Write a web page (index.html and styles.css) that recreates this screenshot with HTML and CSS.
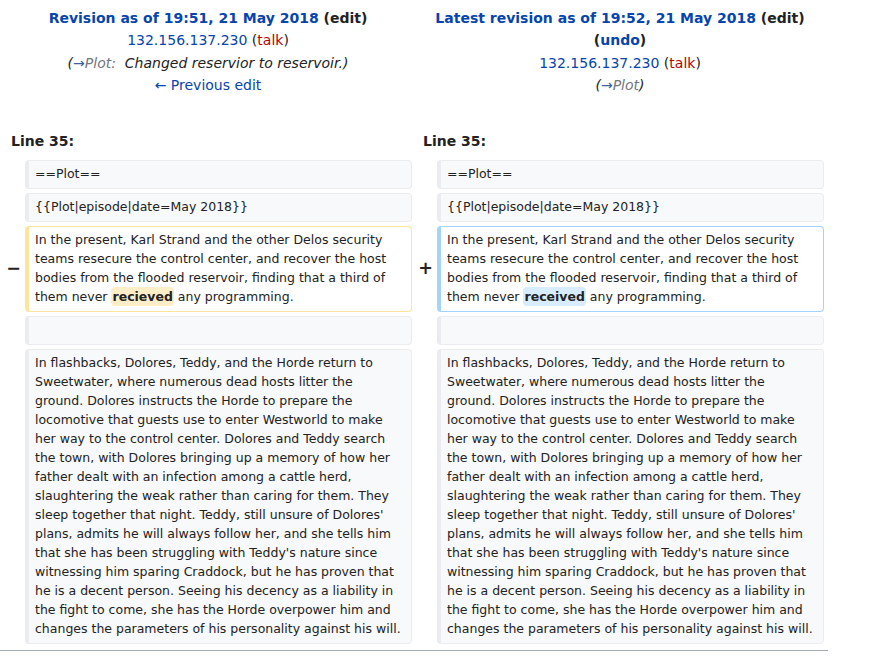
FILE: index.html
```html
<!DOCTYPE html>
<html lang="en">
<head>
<meta charset="utf-8">
<title>Difference between revisions</title>
<link rel="stylesheet" href="styles.css">
</head>
<body>
<div class="diff">
  <div class="diff-title">
    <div class="title-main"><a class="link" href="#">Revision as of 19:51, 21 May 2018</a> <span class="dark">(edit)</span></div>
    <div><a class="link" href="#">132.156.137.230</a> (<a class="new" href="#">talk</a>)</div>
    <div class="comment">(<a class="link arrow" href="#">→</a><span class="autocomment">Plot:</span>&nbsp; Changed reservior to reservoir.)</div>
    <div><a class="link" href="#">← Previous edit</a></div>
  </div>
  <div class="diff-title">
    <div class="title-main"><a class="link" href="#">Latest revision as of 19:52, 21 May 2018</a> <span class="dark">(edit)</span> (<a class="link" href="#">undo</a>)</div>
    <div><a class="link" href="#">132.156.137.230</a> (<a class="new" href="#">talk</a>)</div>
    <div class="comment">(<a class="link arrow" href="#">→</a><span class="autocomment">Plot</span>)</div>
  </div>

  <div class="diff-lineno">Line 35:</div>
  <div class="diff-lineno">Line 35:</div>

  <div class="diff-marker"></div>
  <div class="diff-line diff-context">==Plot==</div>
  <div class="diff-marker"></div>
  <div class="diff-line diff-context">==Plot==</div>

  <div class="diff-marker"></div>
  <div class="diff-line diff-context">{{Plot|episode|date=May 2018}}</div>
  <div class="diff-marker"></div>
  <div class="diff-line diff-context">{{Plot|episode|date=May 2018}}</div>

  <div class="diff-marker">−</div>
  <div class="diff-line diff-deletedline">In the present, Karl Strand and the other Delos security teams resecure the control center, and recover the host bodies from the flooded reservoir, finding that a third of them never <span class="diffchange">recieved</span> any programming.</div>
  <div class="diff-marker">+</div>
  <div class="diff-line diff-addedline">In the present, Karl Strand and the other Delos security teams resecure the control center, and recover the host bodies from the flooded reservoir, finding that a third of them never <span class="diffchange">received</span> any programming.</div>

  <div class="diff-marker"></div>
  <div class="diff-line diff-context">&nbsp;</div>
  <div class="diff-marker"></div>
  <div class="diff-line diff-context">&nbsp;</div>

  <div class="diff-marker"></div>
  <div class="diff-line diff-context">In flashbacks, Dolores, Teddy, and the Horde return to Sweetwater, where numerous dead hosts litter the ground. Dolores instructs the Horde to prepare the locomotive that guests use to enter Westworld to make her way to the control center. Dolores and Teddy search the town, with Dolores bringing up a memory of how her father dealt with an infection among a cattle herd, slaughtering the weak rather than caring for them. They sleep together that night. Teddy, still unsure of Dolores' plans, admits he will always follow her, and she tells him that she has been struggling with Teddy's nature since witnessing him sparing Craddock, but he has proven that he is a decent person. Seeing his decency as a liability in the fight to come, she has the Horde overpower him and changes the parameters of his personality against his will.</div>
  <div class="diff-marker"></div>
  <div class="diff-line diff-context">In flashbacks, Dolores, Teddy, and the Horde return to Sweetwater, where numerous dead hosts litter the ground. Dolores instructs the Horde to prepare the locomotive that guests use to enter Westworld to make her way to the control center. Dolores and Teddy search the town, with Dolores bringing up a memory of how her father dealt with an infection among a cattle herd, slaughtering the weak rather than caring for them. They sleep together that night. Teddy, still unsure of Dolores' plans, admits he will always follow her, and she tells him that she has been struggling with Teddy's nature since witnessing him sparing Craddock, but he has proven that he is a decent person. Seeing his decency as a liability in the fight to come, she has the Horde overpower him and changes the parameters of his personality against his will.</div>
</div>
</body>
</html>
```

FILE: styles.css
```css
html, body {
  margin: 0;
  padding: 0;
  background: #ffffff;
}

body {
  font-family: "DejaVu Sans", "Liberation Sans", sans-serif;
  font-size: 14px;
  line-height: 1.6;
  color: #222222;
}

.diff {
  width: 828px;
  box-sizing: border-box;
  padding: 4px 4px 6px 4px;
  border-bottom: 1px solid #a2a9b1;
  display: grid;
  grid-template-columns: 17px 387px 17px 387px;
  gap: 4px;
  align-items: start;
}

.diff-title {
  grid-column: span 2;
  text-align: center;
  padding-top: 3px;
}

.title-main {
  font-weight: bold;
}

.link {
  color: #0645ad;
  text-decoration: none;
}

.new {
  color: #ba0000;
  text-decoration: none;
}

.dark {
  color: #222222;
}

.comment {
  font-style: italic;
}

.autocomment {
  color: #72777d;
}

.arrow {
  color: #3e5fa0;
}

.diff-lineno {
  grid-column: span 2;
  font-weight: bold;
  padding: 29px 0 4px 7px;
}

.diff-marker {
  align-self: center;
  text-align: right;
  font-weight: bold;
  font-size: 17.5px;
  line-height: 1.2;
  color: #222222;
}

.diff-line {
  font-size: 12.5px;
  line-height: 19px;
  padding: 3.5px 8.5px 4.5px 6px;
  border-style: solid;
  border-width: 1px 1px 1px 4px;
  border-radius: 4px;
  overflow-wrap: break-word;
}

.diff-context {
  background: #f8f9fa;
  border-color: #eaecf0;
  color: #222222;
}

.diff-deletedline {
  background: #ffffff;
  border-color: #ffe49c;
}

.diff-addedline {
  background: #ffffff;
  border-color: #a3d3ff;
}

.diffchange {
  font-weight: bold;
  border-radius: 4px;
  padding: 2px 1px;
}

.diff-deletedline .diffchange {
  background: #feeec8;
}

.diff-addedline .diffchange {
  background: #d8ecff;
}
```
